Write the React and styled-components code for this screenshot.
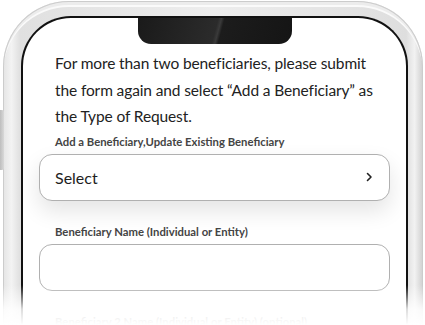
import React from "react";
import styled, { createGlobalStyle } from "styled-components";

const GlobalStyle = createGlobalStyle`
  html, body {
    margin: 0;
    padding: 0;
    background: #ffffff;
    overflow: hidden;
  }
  * { box-sizing: border-box; }
`;

const Stage = styled.div`
  position: relative;
  width: 425px;
  height: 325px;
  overflow: hidden;
  background: #ffffff;
  font-family: "Lato", "Open Sans", sans-serif;
`;

const SideButton = styled.div`
  position: absolute;
  left: 0;
  top: 110px;
  width: 4px;
  height: 60px;
  border-radius: 0 2px 2px 0;
  background: linear-gradient(90deg, #bdbdbd, #d9d9d9);
`;

const Phone = styled.div`
  margin: 1px 0 0 3px;
  width: 420px;
  height: 420px;
  border-radius: 66px;
  padding: 15px 15px 0 18px;
  background:
    linear-gradient(90deg, #e4e4e4 0%, #f3f3f3 2%, #e0e0e0 4%, #ededed 50%, #dedede 96%, #f2f2f2 98%, #cfcfcf 100%);
  box-shadow: inset 0 0 0 1px #cccccc, inset 0 4px 0 #ececec, inset 0 6px 0 #fafafa;
`;

const Screen = styled.div`
  height: 100%;
  border: 2px solid #111111;
  border-bottom: none;
  border-radius: 50px 50px 0 0;
  background: #ffffff;
  display: flex;
  flex-direction: column;
  align-items: center;
  overflow: hidden;
`;

const Notch = styled.div`
  width: 154px;
  height: 26px;
  flex-shrink: 0;
  border-radius: 0 0 13px 13px;
  background: linear-gradient(105deg, #1a1a1a 0%, #2b2b2b 50%, #3a3a3a 52%, #1c1c1c 54%, #151515 100%);
`;

const Content = styled.div`
  align-self: stretch;
  padding: 6px 16px 0 16px;
  display: flex;
  flex-direction: column;
`;

const Intro = styled.p`
  margin: 0 0 0 16px;
  font-size: 15.5px;
  line-height: 26.5px;
  color: #222222;
  letter-spacing: -0.12px;
`;

const Field = styled.div`
  display: flex;
  flex-direction: column;
  margin-top: ${(p) => p.$gap}px;
`;

const Label = styled.label`
  margin: 0 0 5px 16px;
  font-size: 11.3px;
  font-weight: 700;
  color: #444444;
  line-height: 14px;
`;

const SelectBox = styled.div`
  height: 47px;
  border: 1px solid #b0b0b0;
  border-radius: 13px;
  background: #ffffff;
  display: flex;
  align-items: center;
  justify-content: space-between;
  padding: 0 16px 0 15px;
  box-shadow: 0 10px 22px rgba(0, 0, 0, 0.11);
  font-size: 16px;
  color: #1e1e1e;
`;

const TextBox = styled.div`
  height: 47px;
  border: 1px solid #b0b0b0;
  border-radius: 13px;
  background: #ffffff;
`;

const Fade = styled.div`
  position: absolute;
  left: 0;
  right: 0;
  bottom: 0;
  height: 40px;
  background: linear-gradient(180deg, rgba(255,255,255,0) 0%, rgba(255,255,255,0.85) 60%, #ffffff 100%);
  pointer-events: none;
`;

const Chevron = () => (
  <svg width="7" height="10" viewBox="0 0 7 10">
    <path d="M1.5 1.5 L5 5 L1.5 8.5" fill="none" stroke="#222" strokeWidth="1.6" strokeLinecap="round" strokeLinejoin="round" />
  </svg>
);

export default function App() {
  return (
    <Stage>
      <GlobalStyle />
      <SideButton />
      <Phone>
        <Screen>
          <Notch />
          <Content>
            <Intro>
              For more than two beneficiaries, please submit the form again and
              select “Add a Beneficiary” as the Type of Request.
            </Intro>
            <Field $gap={5}>
              <Label>Add a Beneficiary,Update Existing Beneficiary</Label>
              <SelectBox>
                <span>Select</span>
                <Chevron />
              </SelectBox>
            </Field>
            <Field $gap={24}>
              <Label>Beneficiary Name (Individual or Entity)</Label>
              <TextBox />
            </Field>
            <Field $gap={24}>
              <Label>Beneficiary 2 Name (Individual or Entity) (optional)</Label>
            </Field>
          </Content>
        </Screen>
      </Phone>
      <Fade />
    </Stage>
  );
}
